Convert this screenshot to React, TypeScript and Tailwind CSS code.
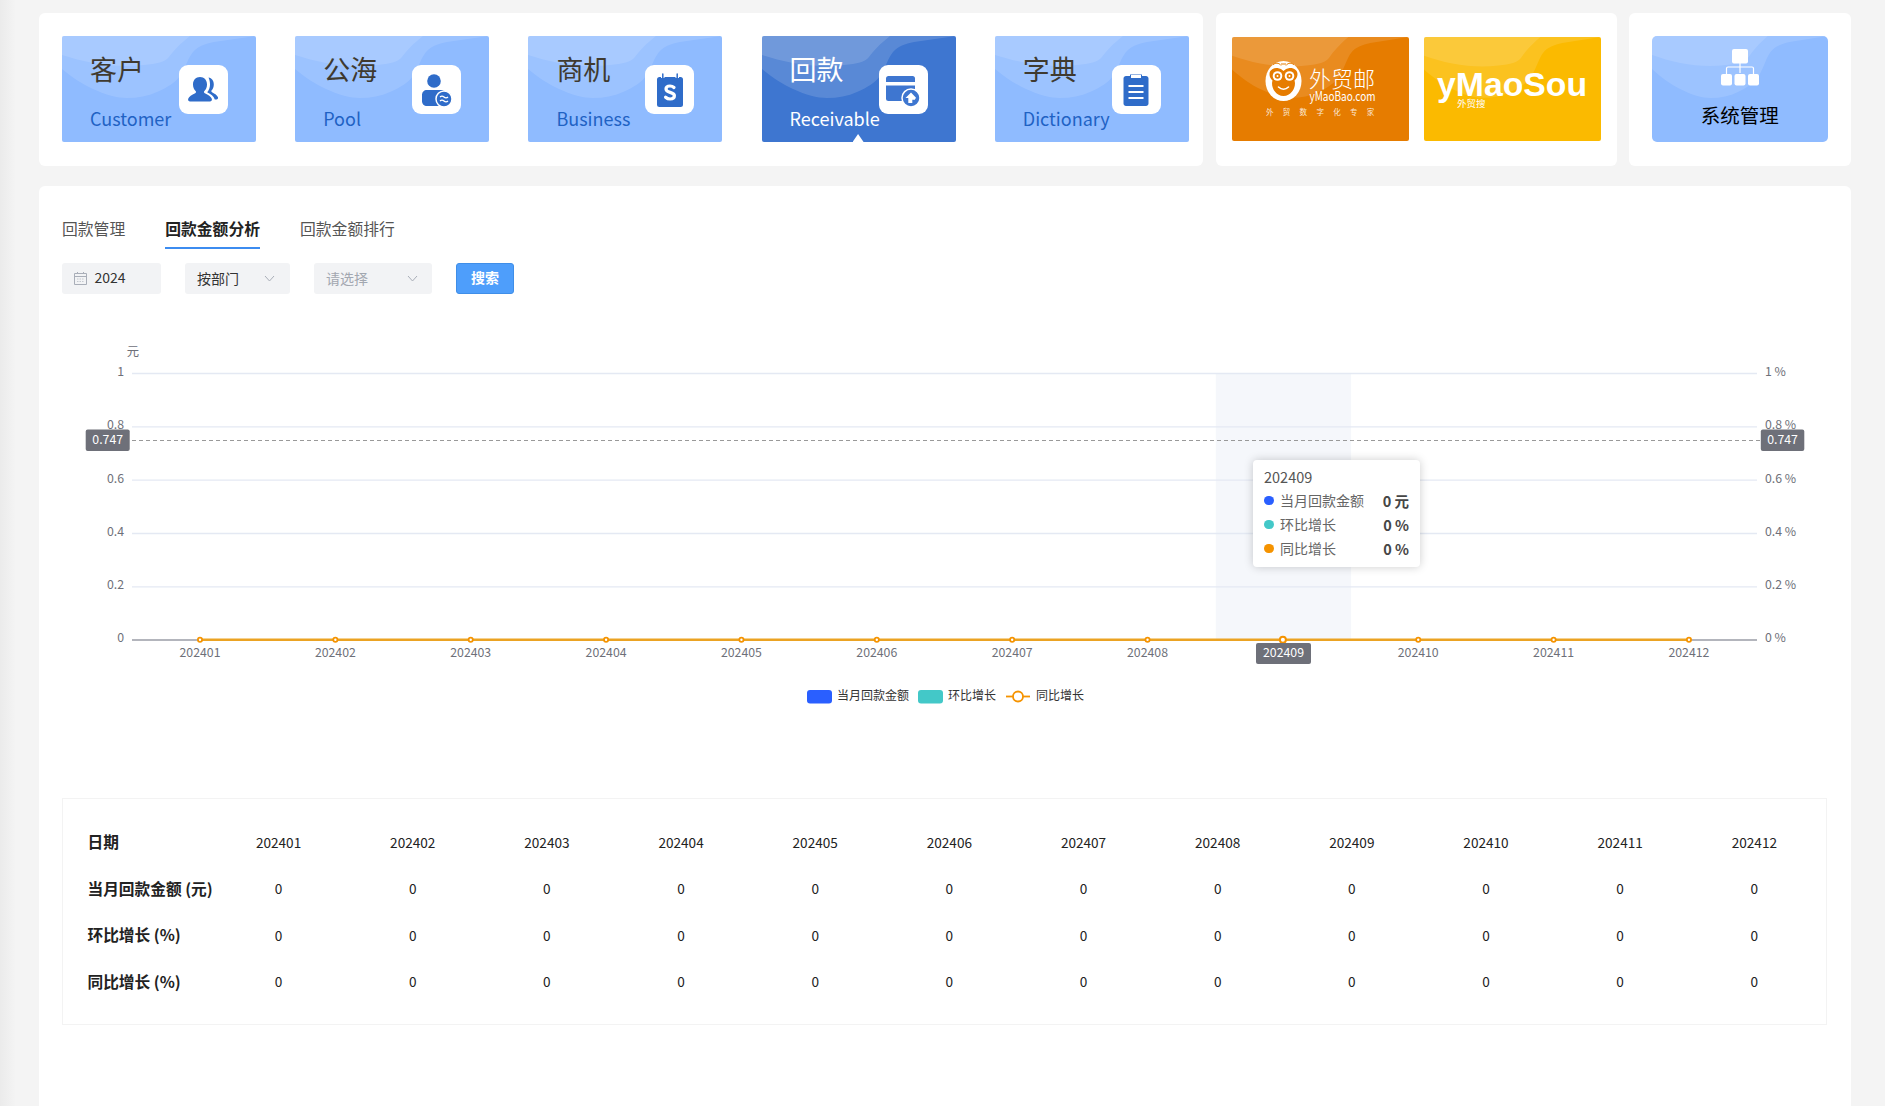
import type { ReactNode } from 'react';

const FONT = 'font-["Noto_Sans_CJK_SC","Noto_Sans",sans-serif]';
const months = ['202401', '202402', '202403', '202404', '202405', '202406', '202407', '202408', '202409', '202410', '202411', '202412'];
const ICON_BLUE = '#2f6cc9';

const Waves = ({ strength = 0.12 }: { strength?: number }) => (
  <svg className="absolute inset-0 h-full w-full" viewBox="0 0 194 106" preserveAspectRatio="none">
    <path fill="#fff" fillOpacity={strength} d="M0 33C11 42 20 48 31 53C44 59 55 62 65 62C76 62 86 60 95 56C106 51 113 47 118 40C124 31 126 22 131 16C136 10 143 8 152 6L194 0H0Z" />
    <path fill="#fff" fillOpacity={strength} d="M0 19C10 22 20 25 31 27C48 30 65 31 82 29C95 28 103 26 107 21C112 14 118 8 128 0H0Z" />
  </svg>
);

const CustomerIcon = () => (
  <svg width="34" height="34" viewBox="0 0 34 34">
    <path fill={ICON_BLUE} d="M13 4c4.300 0 7 3.200 7 7.400 0 2.600-1 5-2.600 6.500-.7.700-.5 1.800.4 2.300 3.500 1.700 6.200 3.300 7 5.600.5 1.400-.5 2.700-1.900 2.700H3.100C1.700 28.500.7 27.200 1.200 25.800c.8-2.300 3.500-3.900 7-5.600.9-.5 1.100-1.600.4-2.300C7 16.400 6 14 6 11.400 6 7.200 8.700 4 13 4Z" />
    <path fill={ICON_BLUE} d="M21.500 4.500c3.300.5 5.300 3.300 5.300 6.900 0 2.300-.8 4.400-2.100 5.800-.6.700-.4 1.600.3 2 2.900 1.500 5.300 3 6 5.100.4 1.200-.4 2.200-1.500 2.200h-1.700c-.9-3.400-4.100-5.500-7.600-7.300 2-2.400 2.800-5 2.800-7.800 0-2.700-.6-5-1.500-6.900Z" />
  </svg>
);

const PoolIcon = () => (
  <svg width="34" height="36" viewBox="0 0 34 36">
    <circle cx="14" cy="9" r="6.800" fill={ICON_BLUE} />
    <path fill={ICON_BLUE} d="M7 18h14c3.500 0 6 2.500 6 6v10H7c-3 0-5-2-5-5v-6c0-3 2-5 5-5Z" />
    <circle cx="24" cy="27" r="8" fill={ICON_BLUE} stroke="#fff" strokeWidth="1.500" />
    <path fill="none" stroke="#fff" strokeWidth="1.300" d="M20 25c1.300-1.200 2.700-1.200 4 0s2.700 1.200 4 0M20 29c1.300-1.200 2.700-1.200 4 0s2.700 1.200 4 0" />
  </svg>
);

const BusinessIcon = () => (
  <svg width="28" height="36" viewBox="0 0 28 36">
    <rect x="1" y="5" width="26" height="30" rx="2.500" fill={ICON_BLUE} />
    <path fill="none" stroke="#fff" strokeWidth="1.200" d="M5 5.500h3.500M19.500 5.500H23" />
    <path fill="none" stroke={ICON_BLUE} strokeWidth="1.500" strokeLinecap="round" d="M6.800 9V2M21.200 9V2" />
    <path fill="none" stroke="#fff" strokeWidth="3.200" strokeLinecap="round" d="M18 15.500c-1.200-1.100-2.500-1.500-4-1.500-2.400 0-4 1.100-4 3 0 4.400 8.400 2.300 8.400 6.800 0 2-1.900 3.200-4.300 3.200-1.700 0-3.200-.6-4.500-1.800" />
  </svg>
);

const ReceivableIcon = () => (
  <svg width="36" height="36" viewBox="0 0 36 36">
    <rect x="1" y="4" width="29" height="25" rx="2.500" fill="#3e76d0" />
    <rect x="1" y="10" width="29" height="3.500" fill="#fff" />
    <circle cx="26" cy="26" r="9" fill="#3e76d0" stroke="#fff" strokeWidth="1.500" />
    <path fill="#fff" d="M26 20.500l-5.500 5.500h2.800v5h4v-3.200h2.500l1.200-2-5-5.300Z" />
  </svg>
);

const DictionaryIcon = () => (
  <svg width="26" height="34" viewBox="0 0 26 34">
    <path fill={ICON_BLUE} d="M3 3h4V1.500h12V3h4c1.400 0 2.500 1.100 2.500 2.500v25c0 1.400-1.100 2.500-2.500 2.500H3C1.600 33 .5 31.900.5 30.500v-25C.5 4.100 1.600 3 3 3Z" />
    <rect x="8" y="2" width="10" height="3" fill="#fff" />
    <path stroke="#fff" strokeWidth="2" d="M5.500 13h15M5.500 19h15M5.500 25h15" />
  </svg>
);

const tiles: { title: string; sub: string; icon: ReactNode; active?: boolean }[] = [
  { title: '客户', sub: 'Customer', icon: <CustomerIcon /> },
  { title: '公海', sub: 'Pool', icon: <PoolIcon /> },
  { title: '商机', sub: 'Business', icon: <BusinessIcon /> },
  { title: '回款', sub: 'Receivable', icon: <ReceivableIcon />, active: true },
  { title: '字典', sub: 'Dictionary', icon: <DictionaryIcon /> },
];

const ModuleTile = ({ title, sub, icon, active }: { title: string; sub: string; icon: ReactNode; active?: boolean }) => (
  <div className={`relative flex h-[106px] w-[194px] shrink-0 overflow-hidden rounded-[2px] ${active ? 'bg-[#3e76d0]' : 'bg-[#8fbbff]'}`}>
    <Waves strength={active ? 0.14 : 0.12} />
    <div className="relative w-[117px] shrink-0 pl-[28px]">
      <div className={`mt-[13.500px] h-[38px] whitespace-nowrap text-[27px] leading-[38px] ${active ? 'text-white' : 'text-[#3f3a30]'}`}>{title}</div>
      <div className={`mt-[17.500px] h-[26px] whitespace-nowrap text-[18px] leading-[26px] ${active ? 'text-white' : 'text-[#1f62c4]'}`}>{sub}</div>
    </div>
    <div className="relative mt-[29px] flex h-[49px] w-[49px] items-center justify-center rounded-[9px] bg-white">{icon}</div>
    {active && <div className="absolute bottom-0 left-[91px] h-[8px] w-[11px] bg-white [clip-path:polygon(50%_0,100%_100%,0_100%)]" />}
  </div>
);

const WaimaoLogo = () => (
  <div className="relative h-[104px] w-[176.500px] overflow-hidden rounded-[2px] bg-[#e67c00]">
    <Waves />
    <svg className="absolute inset-0" width="176.500" height="104" viewBox="0 0 176.500 104">
      {/* monkey head */}
      <ellipse cx="51.500" cy="44" rx="18" ry="20" fill="#fff" />
      <path fill="#e67c00" d="M37.500 37c0-4 4-6.500 8-6 2.500.3 4.500 1.500 6 3 1.500-1.500 3.500-2.700 6-3 4-.5 8 2 8 6 0 3-1.300 5-3 6.500 2 6-2.500 15.500-11 15.500s-13-9.500-11-15.500c-1.700-1.500-3-3.500-3-6.500Z" />
      <circle cx="45.500" cy="39" r="4.800" fill="#fff" />
      <circle cx="57.500" cy="39" r="4.800" fill="#fff" />
      <circle cx="45.500" cy="39" r="2.800" fill="#e67c00" />
      <circle cx="57.500" cy="39" r="2.800" fill="#e67c00" />
      <circle cx="45.500" cy="39" r="1" fill="#fff" />
      <circle cx="57.500" cy="39" r="1" fill="#fff" />
      <path fill="none" stroke="#fff" strokeWidth="1.600" strokeLinecap="round" d="M46.500 50c3 2.800 7 2.800 10 0" />
      <path fill="none" stroke="#e67c00" strokeWidth="1" d="M41 28c2-2.500 6-2.500 8 .5M54 28.500c2-3 6-3 8-.5M49 27h5" />
      <text x="77" y="50" fontSize="22" fill="#fff" fontFamily='"Noto Sans CJK SC",sans-serif' fontWeight="300">外贸邮</text>
      <text x="77.500" y="64" fontSize="13" fill="#fff" fontFamily='"Noto Sans CJK SC",sans-serif' textLength="66" lengthAdjust="spacingAndGlyphs">yMaoBao.com</text>
      <text x="34" y="77.500" fontSize="7.500" fill="#fff" fillOpacity=".85" fontFamily='"Noto Sans CJK SC",sans-serif' letterSpacing="9.300">外贸数字化专家</text>
    </svg>
  </div>
);

const SouLogo = () => (
  <div className="relative h-[104px] w-[176.500px] overflow-hidden rounded-[2px] bg-[#fbba00]">
    <Waves />
    <svg className="absolute inset-0" width="176.500" height="104" viewBox="0 0 176.500 104">
      <text x="13" y="59" fontSize="33" fill="#fff" fontFamily='"Liberation Sans",sans-serif' fontWeight="700" textLength="150" lengthAdjust="spacingAndGlyphs">yMaoSou</text>
      <text x="33" y="69.500" fontSize="9.500" fill="#fff" fontFamily='"Noto Sans CJK SC",sans-serif'>外贸搜</text>
    </svg>
  </div>
);

const OrgIcon = () => (
  <svg width="38" height="38" viewBox="0 0 38 38">
    <rect x="11" y="0" width="16" height="14.500" rx="2" fill="#fff" />
    <path fill="none" stroke="#fff" strokeWidth="1.200" d="M19 14v10M5.500 25v-5.500a1.500 1.500 0 0 1 1.500-1.500h24a1.500 1.500 0 0 1 1.500 1.500V25" />
    <rect x="0" y="25" width="11" height="11.500" rx="2" fill="#fff" />
    <rect x="13.500" y="25" width="11" height="11.500" rx="2" fill="#fff" />
    <rect x="27" y="25" width="11" height="11.500" rx="2" fill="#fff" />
  </svg>
);

const Chevron = () => (
  <svg width="11" height="7" viewBox="0 0 11 7" className="shrink-0">
    <path d="M1 1l4.500 5L10 1" fill="none" stroke="#a9aeb8" strokeWidth="1" />
  </svg>
);

const CalendarIcon = () => (
  <svg width="13" height="14" viewBox="0 0 13 14" className="shrink-0">
    <path d="M.5 2.500h12v11H.5zM.5 5.500h12M3.500 1v2M9.500 1v2" fill="none" stroke="#a9aeb8" strokeWidth="1" />
    <path d="M3 8h7M3 10.500h7" stroke="#c4c8cf" strokeWidth="1" strokeDasharray="1.500 1" />
  </svg>
);

const TICK = { fill: '#6e7079', fontSize: 12.300, fontFamily: '"Noto Sans CJK SC",sans-serif' };
const LEGEND = { fill: '#333', fontSize: 12, fontFamily: '"Noto Sans CJK SC",sans-serif' };
const yTicks = [
  { y: 373.500, l: '1', r: '1 %' },
  { y: 426.800, l: '0.8', r: '0.8 %' },
  { y: 480.200, l: '0.6', r: '0.6 %' },
  { y: 533.500, l: '0.4', r: '0.4 %' },
  { y: 586.800, l: '0.2', r: '0.2 %' },
];
const xAt = (i: number) => 200 + i * 135.360;

const Chart = () => (
  <div className="relative h-[380px] w-[1765px]">
    {/* viewBox keeps page coordinates so the numbers read straight off the picture */}
    <svg className="absolute inset-0" width="1765" height="380" viewBox="62 340 1765 380">
      <rect x="1215.800" y="373.500" width="135.300" height="266" fill="#f5f7fb" />
      {yTicks.map(t => (
        <g key={t.l}>
          <line x1="132" x2="1757" y1={t.y} y2={t.y} stroke="#e4e9f3" strokeWidth="1.300" />
          <text x="124" y={t.y + 2.500} textAnchor="end" {...TICK}>{t.l}</text>
          <text x="1765" y={t.y + 2.500} {...TICK}>{t.r}</text>
        </g>
      ))}
      <text x="133" y="355.500" textAnchor="middle" {...TICK}>元</text>
      <text x="124" y="642" textAnchor="end" {...TICK}>0</text>
      <text x="1765" y="642" {...TICK}>0 %</text>
      <line x1="132" x2="1757" y1="640" y2="640" stroke="#9a9ca6" strokeWidth="1.500" />
      <line x1="132" x2="1760" y1="440.500" y2="440.500" stroke="#999" strokeWidth="1" strokeDasharray="4 3" />
      <line x1={xAt(0)} x2={xAt(11)} y1="639.800" y2="639.800" stroke="#eba323" strokeWidth="2.500" />
      {months.map((m, i) => (
        <g key={m}>
          <circle cx={xAt(i)} cy="639.800" r={i === 8 ? 3 : 2.100} fill="#fff" stroke="#f59300" strokeWidth={i === 8 ? 2 : 1.800} />
          <text x={xAt(i)} y="656.500" textAnchor="middle" {...TICK}>{m}</text>
        </g>
      ))}
      <rect x="85.700" y="429.500" width="44" height="21.500" rx="2" fill="#6e7079" />
      <text x="107.700" y="443.500" textAnchor="middle" {...TICK} fill="#fff">0.747</text>
      <rect x="1760.800" y="429.500" width="43.500" height="21.500" rx="2" fill="#6e7079" />
      <text x="1782.500" y="443.500" textAnchor="middle" {...TICK} fill="#fff">0.747</text>
      <rect x="1256" y="643" width="55" height="21" rx="2" fill="#6e7079" />
      <text x="1283.500" y="657" textAnchor="middle" {...TICK} fill="#fff">202409</text>

      <rect x="807" y="690" width="25" height="13.500" rx="3" fill="#2a5fff" />
      <text x="837" y="700" {...LEGEND}>当月回款金额</text>
      <rect x="918" y="690" width="25" height="13.500" rx="3" fill="#43c8c8" />
      <text x="948" y="700" {...LEGEND}>环比增长</text>
      <line x1="1006" x2="1030" y1="696.500" y2="696.500" stroke="#f59300" strokeWidth="1.800" />
      <circle cx="1018" cy="696.500" r="5" fill="#fff" stroke="#f59300" strokeWidth="1.800" />
      <text x="1036" y="700" {...LEGEND}>同比增长</text>
    </svg>

    <div className="absolute left-[1191px] top-[120px] h-[107px] w-[167px] rounded-[4px] bg-white px-[11px] pt-[5.500px] shadow-[0_0_10px_rgba(0,0,0,0.2)]">
      <div className="text-[14.500px] leading-[22px] text-[#555]">202409</div>
      {[
        { c: 'bg-[#2a5fff]', n: '当月回款金额', v: '0 元' },
        { c: 'bg-[#43c8c8]', n: '环比增长', v: '0 %' },
        { c: 'bg-[#f59300]', n: '同比增长', v: '0 %' },
      ].map(r => (
        <div key={r.n} className="mt-[2px] flex h-[22px] items-center text-[14px]">
          <span className={`h-[9.500px] w-[9.500px] rounded-full ${r.c}`} />
          <span className="ml-[6.500px] text-[#666]">{r.n}</span>
          <span className="ml-auto text-[14.500px] font-bold text-[#464646]">{r.v}</span>
        </div>
      ))}
    </div>
  </div>
);

const rows = ['当月回款金额 (元)', '环比增长 (%)', '同比增长 (%)'];

export default function App() {
  return (
    <div className={`relative h-[1106px] w-full overflow-hidden bg-[#f4f4f4] pl-[39px] pt-[13px] ${FONT}`}>
      <div className="absolute inset-y-0 left-0 w-[16px] bg-gradient-to-r from-[#ebebeb] to-[#f4f4f4]" />
      <div className="relative flex h-[153px]">
        <div className="flex w-[1164px] gap-[39.200px] rounded-[6px] bg-white pl-[23px] pt-[23px]">
          {tiles.map(t => <ModuleTile key={t.title} {...t} />)}
        </div>
        <div className="ml-[13px] flex w-[401px] gap-[15.500px] rounded-[6px] bg-white pl-[16px] pt-[24px]">
          <WaimaoLogo />
          <SouLogo />
        </div>
        <div className="ml-[12px] w-[222px] rounded-[6px] bg-white pl-[23px] pt-[23px]">
          <div className="relative flex h-[106px] w-[175.500px] flex-col items-center overflow-hidden rounded-[5px] bg-[#8fbbff] pt-[13px]">
            <Waves />
            <div className="relative h-[38px]"><OrgIcon /></div>
            <div className="relative mt-[14px] text-[19.500px] leading-[28px] text-black">系统管理</div>
          </div>
        </div>
      </div>

      <div className="relative mt-[20px] h-[920px] w-[1812px] rounded-t-[6px] bg-white pl-[23px] pt-[32px]">
        <div className="flex gap-[40px] text-[15.800px] leading-[22px]">
          <div className="text-[#555]">回款管理</div>
          <div className="border-b-2 border-[#3c8cf0] pb-[7px] font-bold text-[#222]">回款金额分析</div>
          <div className="text-[#555]">回款金额排行</div>
        </div>
        <div className="mt-[14px] flex h-[31px] gap-[24px] text-[14px]">
          <div className="flex w-[99px] items-center gap-[7.500px] rounded-[3px] bg-[#f2f3f5] pb-[2px] pl-[12px] text-[#333]">
            <CalendarIcon />2024
          </div>
          <div className="flex w-[105px] items-center justify-between rounded-[3px] bg-[#f2f3f5] pb-[1px] pl-[12px] pr-[15px] text-[#333]">
            按部门<Chevron />
          </div>
          <div className="flex w-[118px] items-center justify-between rounded-[3px] bg-[#f2f3f5] pb-[1px] pl-[12px] pr-[14px] text-[#a2a7b0]">
            请选择<Chevron />
          </div>
          <div className="flex w-[58px] items-center justify-center rounded-[3px] border border-[#3f8ee8] bg-[#4e9efb] pb-[3px] font-bold text-white">搜索</div>
        </div>
        <div className="mt-[46px]">
          <Chart />
        </div>
        <div className="mt-[78px] h-[227px] w-[1765px] border border-[#f3f3f3] pl-[24.500px] pr-[4.500px] pt-[19.500px]">
          <table className="w-full table-fixed border-collapse text-center text-[13.600px] text-[#222]">
            <tbody>
              <tr className="h-[46.600px]">
                <th className="w-[124px] whitespace-nowrap text-left text-[15.700px] font-bold">日期</th>
                {months.map(m => <td key={m}>{m}</td>)}
              </tr>
              {rows.map(r => (
                <tr key={r} className="h-[46.600px]">
                  <th className="whitespace-nowrap text-left text-[15.700px] font-bold">{r}</th>
                  {months.map(m => <td key={m}>0</td>)}
                </tr>
              ))}
            </tbody>
          </table>
        </div>
      </div>
    </div>
  );
}
